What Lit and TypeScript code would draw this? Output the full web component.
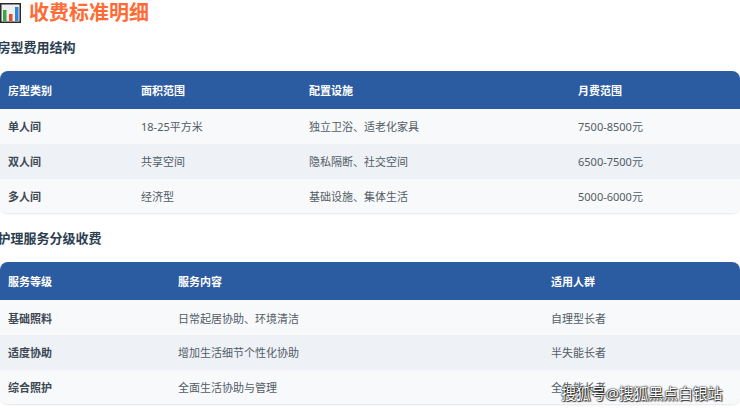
import { LitElement, html, css } from "lit";
import { customElement } from "lit/decorators.js";

const t1 = [
  ["单人间", "18-25平方米", "独立卫浴、适老化家具", "7500-8500元"],
  ["双人间", "共享空间", "隐私隔断、社交空间", "6500-7500元"],
  ["多人间", "经济型", "基础设施、集体生活", "5000-6000元"],
];
const t2 = [
  ["基础照料", "日常起居协助、环境清洁", "自理型长者"],
  ["适度协助", "增加生活细节个性化协助", "半失能长者"],
  ["综合照护", "全面生活协助与管理", "全失能长者"],
];

@customElement("app-root")
export class AppRoot extends LitElement {
  static styles = css`
    :host {
      display: block;
      width: 740px;
      height: 411px;
      overflow: hidden;
      position: relative;
      background: #fff;
      font-family: "Noto Sans", "Noto Sans CJK SC", sans-serif;
      color: #525c66;
    }
    .title {
      display: flex;
      align-items: center;
      gap: 8px;
      height: 22px;
      padding-top: 2px;
      font-size: 20px;
      font-weight: 700;
      color: #ff6b35;
      line-height: 22px;
    }
    .title svg { display: block; flex: none; margin-top: -2px; }
    h3 {
      margin: 0 0 0 -2.5px;
      font-size: 13px;
      font-weight: 700;
      color: #2c3e50;
      line-height: 18px;
    }
    .h1 { margin-top: 14px; }
    .h2 { margin-top: 15.6px; }
    .table {
      margin-top: 15px;
      border-radius: 8px;
      overflow: hidden;
      box-shadow: 0 1px 2px rgba(0, 0, 0, 0.1);
      font-size: 11px;
    }
    .row { display: grid; align-items: center; }
    .t1 .row { grid-template-columns: 133px 168px 269px 170px; }
    .t2 .row { grid-template-columns: 170px 373px 197px; }
    .row > div { padding-left: 8px; white-space: nowrap; }
    .head {
      background: #2b5ba1;
      color: #fff;
      font-weight: 700;
      height: 38.3px;
    }
    .body { height: 34.7px; background: #f8f9fb; }
    .t1 .body > div { padding-bottom: 1px; }
    .body:nth-child(odd) { background: #eef1f6; }
    .body > div:first-child { font-weight: 700; color: #3d4853; }
    .wm {
      position: absolute;
      left: 561px;
      top: 383px;
      font-size: 15px;
      line-height: 20px;
      letter-spacing: -0.2px;
      white-space: nowrap;
      color: #fff;
      text-shadow: 0 0 1px #000, 0 0 2px #000, 1px 1px 1px rgba(0, 0, 0, 0.7);
    }
  `;

  render() {
    return html`
      <div class="title">
        <svg width="21" height="21" viewBox="0 0 21 21">
          <rect x="0.75" y="1.75" width="19.5" height="18.5" fill="#efefef" stroke="#2a2a2a" stroke-width="1.5" />
          <rect x="3" y="8" width="3.5" height="11" fill="#35a845" />
          <rect x="9" y="12" width="3.5" height="7" fill="#ee4a2b" />
          <rect x="15" y="5" width="3.5" height="14" fill="#2f85dc" />
        </svg>
        <span>收费标准明细</span>
      </div>
      <h3 class="h1">房型费用结构</h3>
      <div class="table t1">
        <div class="row head">
          <div>房型类别</div><div>面积范围</div><div>配置设施</div><div>月费范围</div>
        </div>
        ${t1.map((r) => html`<div class="row body">${r.map((c) => html`<div>${c}</div>`)}</div>`)}
      </div>
      <h3 class="h2">护理服务分级收费</h3>
      <div class="table t2">
        <div class="row head">
          <div>服务等级</div><div>服务内容</div><div>适用人群</div>
        </div>
        ${t2.map((r) => html`<div class="row body">${r.map((c) => html`<div>${c}</div>`)}</div>`)}
      </div>
      <div class="wm">搜狐号@搜狐黑点白银站</div>
    `;
  }
}
